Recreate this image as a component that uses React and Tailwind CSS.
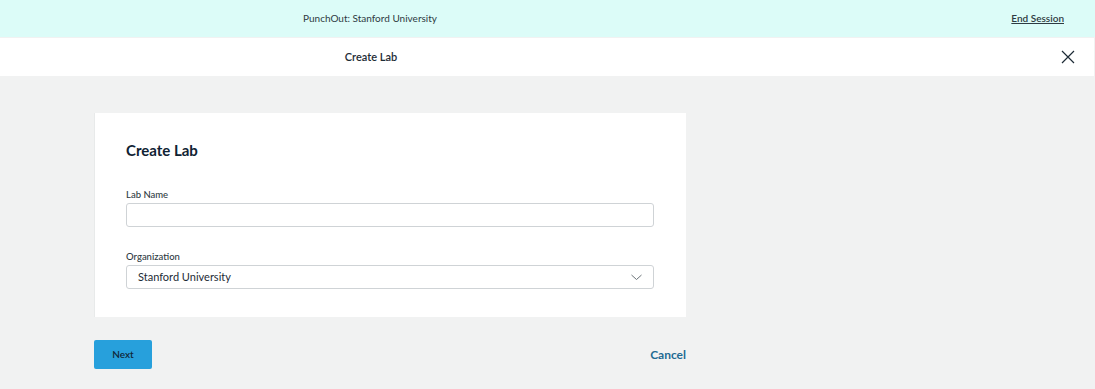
export default function App() {
  return (
    <div className="min-h-[389px] w-full bg-[#f1f2f2] text-[#1d2b36]" style={{ fontFamily: 'Lato, "Open Sans", sans-serif' }}>
      <div className="flex h-[37px] items-center bg-[#dcfcf8]">
        <div className="flex w-[740px] justify-center text-[10px] text-[#2e3a42]">PunchOut: Stanford University</div>
        <div className="flex-1" />
        <a className="mr-[31px] text-[10px] font-semibold text-[#2e3a42] underline">End Session</a>
      </div>
      <div className="mt-px mr-px flex h-[38px] items-center bg-white">
        <div className="flex w-[742px] justify-center text-[11px] font-semibold text-[#1d2b36]">Create Lab</div>
        <div className="flex-1" />
        <svg className="mr-[19px]" width="14" height="14" viewBox="0 0 14 14" fill="none" stroke="#1d2b36" strokeWidth="1.2">
          <path d="M1 1L13 13M13 1L1 13" />
        </svg>
      </div>
      <div className="pl-[94px] pt-[37px]">
        <div className="w-[592px] border-l border-[#e8eaea] bg-white px-[31px] pb-[28px] pt-[27px]">
          <h1 className="text-[15px] font-bold leading-[20px] text-[#0f2233]">Create Lab</h1>
          <label className="mt-[29px] block text-[9.5px] font-medium leading-[12px] text-[#2e3a42]">Lab Name</label>
          <div className="mt-[2px] h-[24px] w-[528px] rounded-[3px] border border-[#cfd3d6] bg-white" />
          <label className="mt-[24px] block text-[9.5px] font-medium leading-[12px] text-[#2e3a42]">Organization</label>
          <div className="mt-[2px] flex h-[24px] w-[528px] items-center justify-between rounded-[3px] border border-[#cfd3d6] bg-white pl-[11px] pr-[11px]">
            <span className="text-[11px] text-[#1d2b36]">Stanford University</span>
            <svg width="11" height="7" viewBox="0 0 11 7" fill="none" stroke="#6b7378" strokeWidth="1">
              <path d="M0.5 1L5.5 5.5L10.5 1" />
            </svg>
          </div>
        </div>
        <div className="mt-[23px] flex w-[592px] items-center justify-between">
          <button className="h-[29px] w-[58px] rounded-[2px] bg-[#27a0dc] text-[10px] font-semibold text-[#10283a]">Next</button>
          <a className="text-[12px] font-bold text-[#1f6b93]">Cancel</a>
        </div>
      </div>
    </div>
  );
}
